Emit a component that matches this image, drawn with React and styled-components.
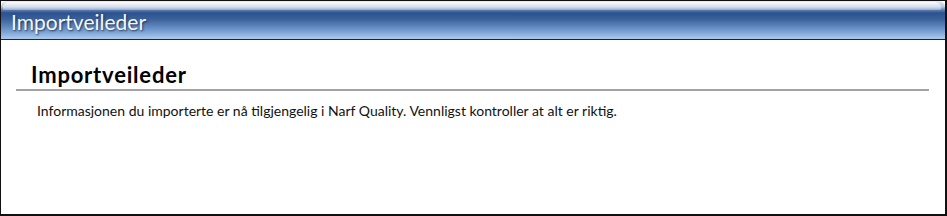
import React from 'react'
import styled, { createGlobalStyle } from 'styled-components'

const GlobalStyle = createGlobalStyle`
  html, body {
    margin: 0;
    padding: 0;
    background: #ffffff;
  }
  body {
    font-family: Lato, "Open Sans", sans-serif;
  }
`

function App() {
    return (
        <>
            <GlobalStyle />
            <Frame>
                <TitleBar>
                    <Gloss />
                    <TitleText>Importveileder</TitleText>
                </TitleBar>
                <Body>
                    <Heading>Importveileder</Heading>
                    <Message>
                        Informasjonen du importerte er nå tilgjengelig i Narf Quality. Vennligst kontroller at alt er riktig.
                    </Message>
                </Body>
            </Frame>
        </>
    )
}

export default App

const Frame = styled.div`
    box-sizing: border-box;
    width: 947px;
    height: 216px;
    border: 2px solid #111;
    border-top-width: 1px;
    border-left-width: 1px;
    background: #fff;
    display: flex;
    flex-direction: column;
`

const TitleBar = styled.div`
    position: relative;
    height: 38px;
    border-bottom: 1px solid #1a2433;
    border-radius: 6px 6px 0 0;
    background: linear-gradient(
        to bottom,
        #e6ecf4 0px,
        #b7c6dc 6px,
        #5d7fb0 9px,
        #2c5190 12px,
        #3a6199 18px,
        #6a93c8 28px,
        #a6c6ec 37px
    );
    display: flex;
    align-items: center;
    padding-left: 10px;
    overflow: hidden;
`

const Gloss = styled.div`
    position: absolute;
    left: 2px;
    right: 4px;
    top: 1px;
    height: 8px;
    border-radius: 6px 8px 2px 2px;
    background: linear-gradient(to bottom, rgba(255,255,255,0.85), rgba(200,212,232,0.5));
`

const TitleText = styled.span`
    position: relative;
    margin-top: 3px;
    font-family: Lato, "Open Sans", sans-serif;
    font-size: 21px;
    color: #f4f7fb;
    text-shadow: 1px 1px 2px rgba(20, 30, 60, 0.8);
`

const Body = styled.div`
    padding: 22px 16px 0 15px;
`

const Heading = styled.h2`
    margin: 0;
    padding: 0 0 1px 15px;
    border-bottom: 2px solid #a3a3a3;
    font-family: Lato, "Open Sans", sans-serif;
    font-size: 22px;
    letter-spacing: 0.8px;
    font-weight: 700;
    color: #000;
    line-height: 26px;
`

const Message = styled.p`
    margin: 11px 0 0 21px;
    font-family: Lato, "Open Sans", sans-serif;
    font-size: 14px;
    color: #111;
`
